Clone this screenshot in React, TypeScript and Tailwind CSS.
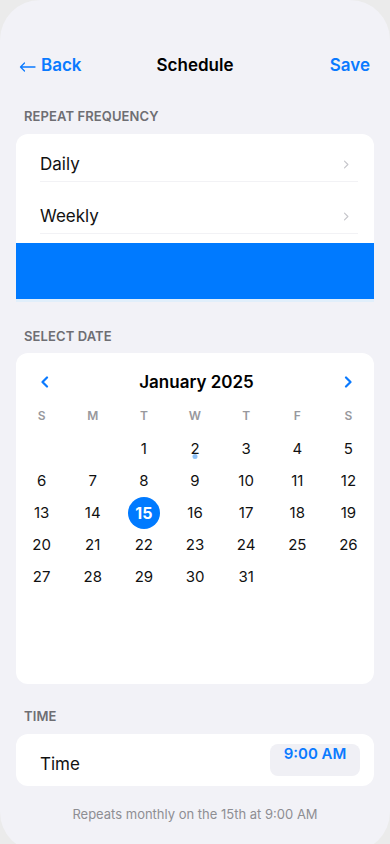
import React from "react";

const BLUE = "#0a7aff";

function Chevron({ dir, color, w, h, sw }: { dir: "l" | "r"; color: string; w: number; h: number; sw: number }) {
  return (
    <svg width={w} height={h} viewBox="0 0 8 12" fill="none">
      {dir === "r" ? (
        <path d="M2 1.5 L6.5 6 L2 10.5" stroke={color} strokeWidth={sw} strokeLinecap="round" strokeLinejoin="round" />
      ) : (
        <path d="M6 1.5 L1.5 6 L6 10.5" stroke={color} strokeWidth={sw} strokeLinecap="round" strokeLinejoin="round" />
      )}
    </svg>
  );
}

export default function App() {
  const weekdays = ["S", "M", "T", "W", "T", "F", "S"];
  const cells: (number | null)[] = [null, null, ...Array.from({ length: 31 }, (_, i) => i + 1)];
  return (
    <div className="min-h-screen bg-[#ebebeb]" style={{ fontFamily: "Inter, 'Noto Sans', sans-serif" }}>
      <div className="h-[852px] rounded-[40px] bg-[#f2f2f7] overflow-hidden flex flex-col">
        {/* Header */}
        <div className="mt-[52px] h-[28px] pl-[19px] pr-[20px] flex items-center justify-between relative">
          <div className="flex items-center gap-[5px] text-[17px] font-semibold text-[#0a7aff]">
            <svg width="17" height="10" viewBox="0 0 17 10" fill="none" className="mt-[2px]">
              <path d="M16 5 H1.5 M5.5 1 L1.5 5 L5.5 9" stroke="#0a7aff" strokeWidth="1.3" strokeLinecap="round" strokeLinejoin="round" />
            </svg>
            <span>Back</span>
          </div>
          <div className="absolute left-1/2 -translate-x-1/2 text-[17px] font-semibold text-black">Schedule</div>
          <div className="text-[17px] font-semibold text-[#0a7aff]">Save</div>
        </div>

        {/* Repeat frequency */}
        <div className="mt-[28px] px-[24px] text-[13px] leading-[16px] font-semibold text-[#6e6e73] tracking-[0.1px]">REPEAT FREQUENCY</div>
        <div className="mt-[10px] mx-[16px] rounded-t-[12px] bg-white flex flex-col">
          <div className="ml-[24px] mr-[16px] pt-[18px] pb-[5px] border-b border-[#f2f2f5] flex items-center justify-between">
            <span className="text-[17px] leading-[24px] text-[#111]">Daily</span>
            <span className="pr-[9px] flex items-center"><Chevron dir="r" color="#c7c7cc" w={6} h={9} sw={1.6} /></span>
          </div>
          <div className="ml-[24px] mr-[16px] pt-[22px] pb-[5px] border-b border-[#f2f2f5] flex items-center justify-between">
            <span className="text-[17px] leading-[24px] text-[#111]">Weekly</span>
            <span className="pr-[9px] flex items-center"><Chevron dir="r" color="#c7c7cc" w={6} h={9} sw={1.6} /></span>
          </div>
          <div className="mt-[9px] h-[56px] bg-[#007aff]" />
          <div className="h-[3px] bg-[#e1effb]" />
        </div>

        {/* Select date */}
        <div className="mt-[26px] px-[24px] text-[13px] leading-[16px] font-semibold text-[#6e6e73] tracking-[0.1px]">SELECT DATE</div>
        <div className="mt-[9px] mx-[16px] h-[331px] rounded-[12px] bg-white flex flex-col">
          <div className="pt-[17px] pl-[24px] pr-[21px] flex items-center justify-between">
            <span className="w-[10px] flex justify-center"><Chevron dir="l" color={BLUE} w={8} h={12} sw={2.2} /></span>
            <span className="text-[17px] leading-[24px] font-semibold text-black">January 2025</span>
            <span className="w-[10px] flex justify-center"><Chevron dir="r" color={BLUE} w={8} h={12} sw={2.2} /></span>
          </div>
          <div className="mt-[14px] grid grid-cols-7">
            {weekdays.map((d, i) => (
              <div key={i} className="text-center text-[12px] leading-[16px] font-semibold text-[#98989d]">{d}</div>
            ))}
          </div>
          <div className="mt-[9px] grid grid-cols-7">
            {cells.map((n, i) => (
              <div key={i} className="h-[32px] flex items-center justify-center relative">
                {n === 15 ? (
                  <div className="w-[32px] h-[32px] rounded-full bg-[#007aff] flex items-center justify-center text-[16px] font-bold text-white">15</div>
                ) : n !== null ? (
                  <span className="text-[15px] leading-[32px] text-[#111]">{n}</span>
                ) : null}
                {n === 2 && (
                  <span className="absolute top-[21px] left-1/2 -translate-x-1/2 w-[5px] h-[5px] rounded-full bg-[#8cc0f6]" />
                )}
              </div>
            ))}
          </div>
        </div>

        {/* Time */}
        <div className="mt-[24px] px-[24px] text-[13px] leading-[16px] font-semibold text-[#6e6e73] tracking-[0.1px]">TIME</div>
        <div className="mt-[10px] mx-[16px] h-[52px] rounded-[12px] bg-white flex items-start justify-between">
          <span className="mt-[18px] ml-[24px] text-[17px] leading-[24px] text-[#111]">Time</span>
          <div className="mt-[10px] mr-[14px] w-[90px] h-[32px] rounded-[8px] bg-[#f0f0f5] flex justify-center">
            <span className="text-[15px] leading-[20px] font-semibold text-[#0a7aff]">9:00 AM</span>
          </div>
        </div>

        <div className="mt-[20px] text-center text-[13px] leading-[16px] text-[#8e8e93]">Repeats monthly on the 15th at 9:00 AM</div>
      </div>
    </div>
  );
}
